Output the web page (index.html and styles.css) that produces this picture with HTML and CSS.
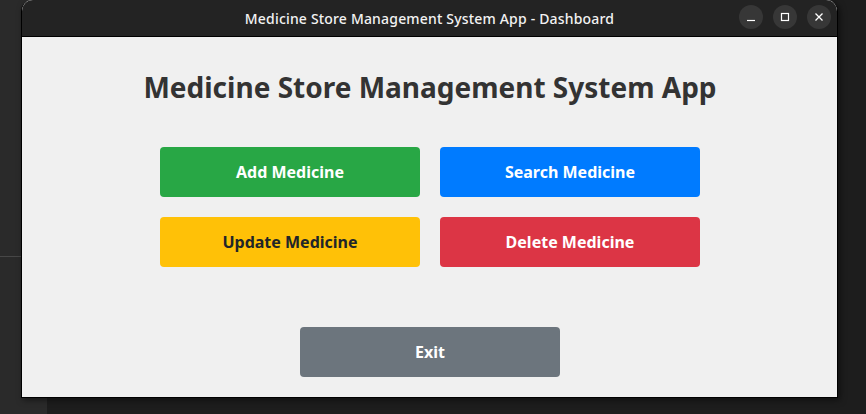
FILE: index.html
```html
<!DOCTYPE html>
<html>
<head>
<meta charset="utf-8">
<link rel="stylesheet" href="styles.css">
</head>
<body>
<div class="desktop">
  <div class="side-strip"><div class="side-line"></div></div>
  <div class="window">
    <div class="titlebar">
      <span class="title-text">Medicine Store Management System App - Dashboard</span>
      <div class="controls">
        <span class="ctl"><svg width="10" height="10" viewBox="0 0 10 10"><line x1="1" y1="8.5" x2="9" y2="8.5" stroke="#fff" stroke-width="1.2"/></svg></span>
        <span class="ctl"><svg width="10" height="10" viewBox="0 0 10 10"><rect x="1.5" y="1.5" width="7" height="7" fill="none" stroke="#fff" stroke-width="1.2"/></svg></span>
        <span class="ctl"><svg width="10" height="10" viewBox="0 0 10 10"><path d="M1.5 1.5 L8.5 8.5 M8.5 1.5 L1.5 8.5" stroke="#fff" stroke-width="1.3"/></svg></span>
      </div>
    </div>
    <div class="content">
      <h1 class="heading">Medicine Store Management System App</h1>
      <div class="grid">
        <button class="btn green">Add Medicine</button>
        <button class="btn blue">Search Medicine</button>
        <button class="btn yellow">Update Medicine</button>
        <button class="btn red">Delete Medicine</button>
      </div>
      <button class="btn gray exit">Exit</button>
    </div>
  </div>
</div>
</body>
</html>
```
FILE: styles.css
```css
html, body {
  margin: 0;
  padding: 0;
}
body {
  width: 866px;
  height: 414px;
  overflow: hidden;
  background: #1d1d1d;
  font-family: "Noto Sans", "Open Sans", sans-serif;
}
.desktop {
  position: relative;
  width: 866px;
  height: 414px;
}
.side-strip {
  position: absolute;
  left: 0;
  top: 0;
  width: 47px;
  height: 414px;
  background: #2a2a2a;
}
.side-line {
  margin-top: 256px;
  width: 21px;
  height: 1px;
  background: #474747;
}
.window {
  position: absolute;
  left: 21px;
  top: 0;
  width: 817px;
  height: 398px;
  box-sizing: border-box;
  border: 1px solid #000;
  border-top: none;
  border-radius: 11px 11px 0 0;
  background: #f0f0f0;
  box-shadow: 2px 2px 6px rgba(0,0,0,0.5);
  display: flex;
  flex-direction: column;
  overflow: hidden;
}
.titlebar {
  height: 36px;
  flex: none;
  background: #232323;
  border-bottom: 1px solid #000;
  position: relative;
  display: flex;
  align-items: center;
  justify-content: center;
  border-radius: 11px 11px 0 0;
}
.title-text {
  color: #f2f2f2;
  font-family: "Noto Sans", sans-serif;
  font-size: 14px;
  font-weight: 500;
  letter-spacing: 0.18px;
}
.controls {
  position: absolute;
  right: 6px;
  top: 5px;
  display: flex;
  gap: 10px;
}
.ctl {
  width: 24px;
  height: 24px;
  border-radius: 50%;
  background: #373737;
  display: flex;
  align-items: center;
  justify-content: center;
}
.content {
  flex: 1;
  display: flex;
  flex-direction: column;
  align-items: center;
  padding-top: 30px;
  padding-left: 1px;
}
.heading {
  margin: 0;
  font-size: 28px;
  line-height: 40px;
  font-weight: 700;
  color: #333333;
}
.grid {
  margin-top: 40px;
  display: grid;
  grid-template-columns: 260px 260px;
  grid-auto-rows: 50px;
  gap: 20px;
}
.btn {
  border: none;
  border-radius: 4px;
  font-family: "Noto Sans", sans-serif;
  font-size: 16px;
  font-weight: 700;
  color: #ffffff;
  padding: 0;
  width: 260px;
  height: 50px;
}
.green { background: #28a745; }
.blue { background: #007bff; }
.yellow { background: #ffc107; color: #212529; }
.red { background: #dc3545; }
.gray { background: #6c757d; }
.exit {
  margin-top: 60px;
}
```
